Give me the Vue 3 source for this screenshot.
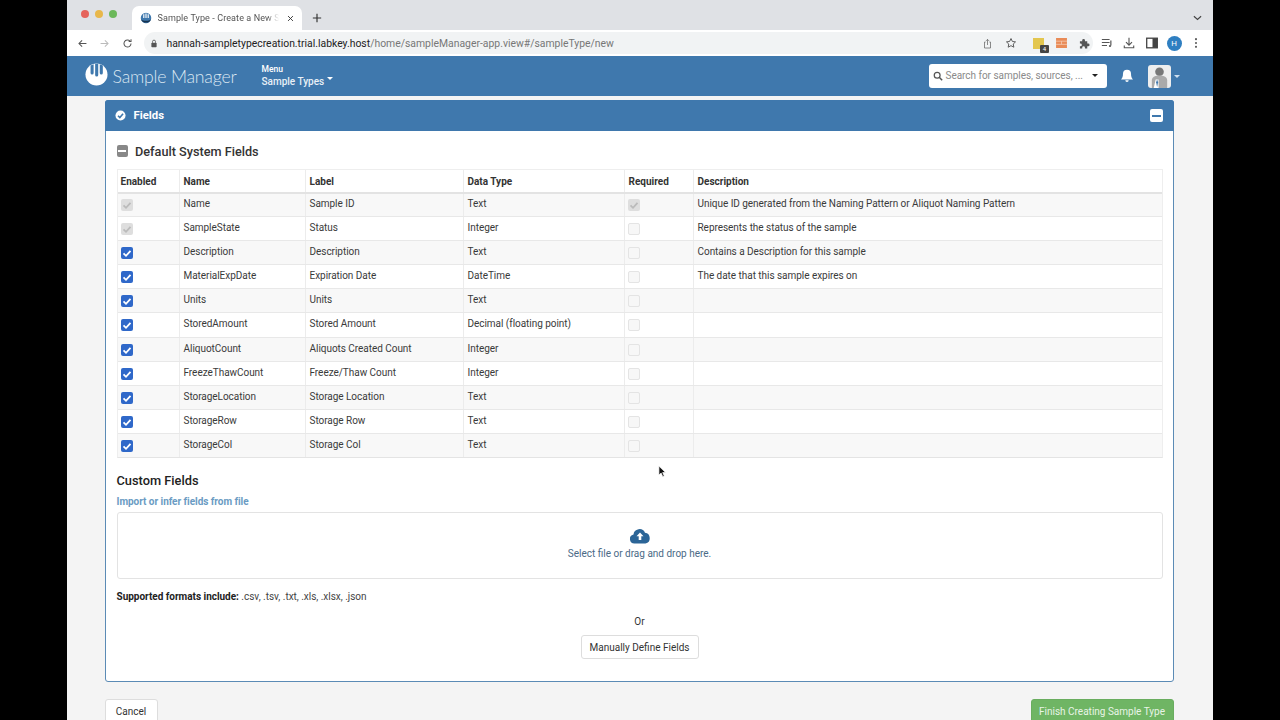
<template>
  <div class="stage">
    <div class="browser">
      <div class="tabstrip">
        <div class="lights"><i class="l r"></i><i class="l y"></i><i class="l g"></i></div>
        <div class="tab">
          <svg class="favicon" viewBox="0 0 16 16"><circle cx="8" cy="8" r="7" fill="#3f78ad"/><path d="M1.500 9.500c2 3 11 3 13 0-1 6-12 6-13 0z" fill="#16324e"/><path d="M5 3v5M8 2v6M11 3v5" stroke="#e4edf5" stroke-width="1.800"/></svg>
          <span class="tabtitle">Sample Type - Create a New S</span>
          <svg class="tabx" viewBox="0 0 10 10"><path d="M1.500 1.500l7 7M8.500 1.500l-7 7" stroke="#333" stroke-width="1.300"/></svg>
        </div>
        <svg class="plus" viewBox="0 0 12 12"><path d="M6 1v10M1 6h10" stroke="#333" stroke-width="1.400"/></svg>
        <svg class="chev" viewBox="0 0 10 6"><path d="M1 1l4 3.500L9 1" fill="none" stroke="#444" stroke-width="1.300"/></svg>
      </div>
      <div class="toolbar">
        <svg class="tb back" viewBox="0 0 14 14"><path d="M12 7H2.500M6.500 3L2.500 7l4 4" fill="none" stroke="#555" stroke-width="1.300"/></svg>
        <svg class="tb fwd" viewBox="0 0 14 14"><path d="M2 7h9.500M7.500 3l4 4-4 4" fill="none" stroke="#bbb" stroke-width="1.300"/></svg>
        <svg class="tb reload" viewBox="0 0 14 14"><path d="M11.500 7a4.500 4.500 0 1 1-1.300-3.200M11.500 1.500v3h-3" fill="none" stroke="#555" stroke-width="1.300"/></svg>
        <div class="omnibox">
          <svg class="lock" viewBox="0 0 10 12"><rect x="1.500" y="5" width="7" height="6" rx="1" fill="#555"/><path d="M3 5V3.500a2 2 0 0 1 4 0V5" fill="none" stroke="#555" stroke-width="1.100"/></svg>
          <span class="url"><b>hannah-sampletypecreation.trial.labkey.host</b>/home/sampleManager-app.view#/sampleType/new</span>
          <svg class="share" viewBox="0 0 12 14"><path d="M3.500 5H2v8h8V5H8.500M6 9V1.500M4 3.500l2-2 2 2" fill="none" stroke="#666" stroke-width="1"/></svg>
          <svg class="star" viewBox="0 0 14 14"><path d="M7 1.800l1.600 3.400 3.700.5-2.700 2.500.7 3.700L7 10.100l-3.300 1.800.7-3.700-2.700-2.500 3.700-.5z" fill="none" stroke="#555" stroke-width="1.100"/></svg>
        </div>
        <div class="exts">
          <div class="ext-y"><span>4</span></div>
          <svg class="ext-o" viewBox="0 0 12 11"><rect width="12" height="11" fill="#e98b57"/><path d="M0 3.500h12M0 7h12M6 3.500v3.500" stroke="#f6d2bb" stroke-width=".8"/></svg>
          <svg class="ext-p" viewBox="0 0 12 12"><path d="M1 3.500h2.500V2.500a1.500 1.500 0 1 1 3 0v1H9V6h1a1.500 1.500 0 1 1 0 3H9v2.500H6.500V10.500a1.500 1.500 0 1 0-3 0v1H1V9h.6a1.500 1.500 0 1 0 0-3H1z" fill="#555"/></svg>
        </div>
        <svg class="tr music" viewBox="0 0 14 12"><path d="M1 2h9M1 5.500h9M1 9h6" stroke="#555" stroke-width="1.200"/><path d="M11.500 3v6" stroke="#555" stroke-width="1.400"/><circle cx="10.500" cy="9.500" r="1.300" fill="#555"/></svg>
        <svg class="tr dl" viewBox="0 0 14 14"><path d="M7 1v8M3.500 6L7 9.500 10.500 6M1.500 10v2.500h11V10" fill="none" stroke="#555" stroke-width="1.300"/></svg>
        <svg class="tr side" viewBox="0 0 12 12"><rect x=".7" y="1.200" width="10.600" height="9.600" fill="none" stroke="#444" stroke-width="1.300"/><rect x="6.500" y="1.200" width="4.800" height="9.600" fill="#444"/></svg>
        <span class="avatar-h">H</span>
        <svg class="dots" viewBox="0 0 4 14"><circle cx="2" cy="2.500" r="1.200" fill="#555"/><circle cx="2" cy="7" r="1.200" fill="#555"/><circle cx="2" cy="11.500" r="1.200" fill="#555"/></svg>
      </div>
      <header class="appnav">
        <svg class="logo" viewBox="0 0 24 24"><circle cx="12" cy="12" r="11.500" fill="#fff"/><path d="M5.800 2.500v8a1.600 1.600 0 0 0 3.200 0V1.200zM10.600 .8v11.700a1.600 1.600 0 0 0 3.200 0V.8zM15.400 1.200v9.300a1.600 1.600 0 0 0 3.200 0v-8z" fill="#3f78ad"/></svg>
        <span class="brand">Sample Manager</span>
        <div class="menu">
          <span class="menu-small">Menu</span>
          <span class="menu-main">Sample Types<i class="caret"></i></span>
        </div>
        <div class="spacer"></div>
        <div class="search">
          <svg class="mag" viewBox="0 0 12 12"><circle cx="5" cy="5" r="3.500" fill="none" stroke="#555" stroke-width="1.500"/><path d="M7.500 7.500L11 11" stroke="#555" stroke-width="1.800"/></svg>
          <span class="placeholder">Search for samples, sources, ...</span>
          <i class="caret dark"></i>
        </div>
        <svg class="bell" viewBox="0 0 14 14"><path d="M7 .8a4 4 0 0 1 4 4c0 3 .8 4.700 2 5.700H1c1.200-1 2-2.700 2-5.700a4 4 0 0 1 4-4z" fill="#fff"/><path d="M5.300 11.300h3.400a1.700 1.700 0 0 1-3.400 0z" fill="#fff"/></svg>
        <div class="userpic">
          <svg viewBox="0 0 24 24"><circle cx="12" cy="7" r="4.500" fill="#777"/><path d="M4 24v-8c0-3 3-5 8-5s8 2 8 5v8z" fill="#aaa"/><path d="M8 15h3v9H6z" fill="#fff"/><path d="M8.500 18l1-3 1 3-1 5z" fill="#3f78ad"/></svg>
        </div>
        <i class="caret light"></i>
      </header>
      <main class="page">
        <section class="panel">
          <div class="panel-head">
            <svg class="check" viewBox="0 0 12 12"><circle cx="6" cy="6" r="5.500" fill="#fff"/><path d="M3.300 6.200l2 2 3.500-4" fill="none" stroke="#3f78ad" stroke-width="1.700"/></svg>
            <span class="panel-title">Fields</span>
            <span class="collapse"><i></i></span>
          </div>
          <div class="panel-body">
            <div class="sys-title">
              <span class="minus"><i></i></span>
              <span>Default System Fields</span>
            </div>
            <div class="grid-table">
              <div class="row head">
                <div v-for="h in heads" :key="h" class="cell">{{ h }}</div>
              </div>
              <div v-for="(r, i) in rows" :key="r.name" class="row" :class="{ odd: i % 2 === 0 }">
                <div class="cell"><span class="box" :class="r.en"><svg v-if="r.en !== 'empty'" viewBox="0 0 12 12"><path d="M2.500 6.300l2.500 2.500 4.500-5" fill="none" :stroke="r.en === 'on' ? '#fff' : '#bbb'" stroke-width="1.800"/></svg></span></div>
                <div class="cell">{{ r.name }}</div>
                <div class="cell">{{ r.label }}</div>
                <div class="cell">{{ r.type }}</div>
                <div class="cell"><span class="box req" :class="r.req ? 'off' : 'empty'"><svg v-if="r.req" viewBox="0 0 12 12"><path d="M2.500 6.300l2.500 2.500 4.500-5" fill="none" stroke="#bbb" stroke-width="1.800"/></svg></span></div>
                <div class="cell">{{ r.desc }}</div>
              </div>
            </div>
            <h3 class="custom">Custom Fields</h3>
            <div class="import">Import or infer fields from file</div>
            <div class="drop">
              <svg class="cloud" viewBox="0 0 22 16"><path d="M5.500 15.500a4.500 4.500 0 0 1-1-8.900A6 6 0 0 1 16 4.700a5.500 5.500 0 0 1 .5 10.800z" fill="#2b6597"/><path d="M11 4.500l3.500 3.700h-2.200v3.800H9.700V8.200H7.500z" fill="#fff"/></svg>
              <span class="drop-text">Select file or drag and drop here.</span>
            </div>
            <p class="formats"><b>Supported formats include:</b> .csv, .tsv, .txt, .xls, .xlsx, .json</p>
            <div class="or">Or</div>
            <button class="btn manual">Manually Define Fields</button>
          </div>
        </section>
        <div class="footer">
          <button class="btn cancel">Cancel</button>
          <button class="btn finish">Finish Creating Sample Type</button>
        </div>
        <svg class="cursor" viewBox="0 0 10 14"><path d="M1 1v10l2.500-2.200 1.800 4 1.700-.8-1.800-3.800h3.300z" fill="#111" stroke="#fff" stroke-width=".8"/></svg>
      </main>
    </div>
  </div>
</template>

<script setup>
const heads = ['Enabled', 'Name', 'Label', 'Data Type', 'Required', 'Description']
const rows = [
  { en: 'off', name: 'Name', label: 'Sample ID', type: 'Text', req: true, desc: 'Unique ID generated from the Naming Pattern or Aliquot Naming Pattern' },
  { en: 'off', name: 'SampleState', label: 'Status', type: 'Integer', desc: 'Represents the status of the sample' },
  { en: 'on', name: 'Description', label: 'Description', type: 'Text', desc: 'Contains a Description for this sample' },
  { en: 'on', name: 'MaterialExpDate', label: 'Expiration Date', type: 'DateTime', desc: 'The date that this sample expires on' },
  { en: 'on', name: 'Units', label: 'Units', type: 'Text', desc: '' },
  { en: 'on', name: 'StoredAmount', label: 'Stored Amount', type: 'Decimal (floating point)', desc: '' },
  { en: 'on', name: 'AliquotCount', label: 'Aliquots Created Count', type: 'Integer', desc: '' },
  { en: 'on', name: 'FreezeThawCount', label: 'Freeze/Thaw Count', type: 'Integer', desc: '' },
  { en: 'on', name: 'StorageLocation', label: 'Storage Location', type: 'Text', desc: '' },
  { en: 'on', name: 'StorageRow', label: 'Storage Row', type: 'Text', desc: '' },
  { en: 'on', name: 'StorageCol', label: 'Storage Col', type: 'Text', desc: '' }
]
</script>

<style>
html, body { margin: 0; background: #000; overflow: hidden; }
</style>

<style scoped>
.stage { width: 1280px; height: 720px; background: #000; display: flex; justify-content: center; padding-right: 1px; box-sizing: border-box; overflow: hidden; font-family: Roboto, "Liberation Sans", sans-serif; color: #333; }
.browser { width: 1146px; height: 720px; display: flex; flex-direction: column; overflow: hidden; background: #f4f4f4; }

.tabstrip { height: 30px; flex: none; background: #dfe1e5; display: flex; align-items: center; position: relative; }
.lights { display: flex; gap: 6px; margin-left: 14px; margin-top: -3px; }
.l { width: 8px; height: 8px; border-radius: 50%; display: block; }
.r { background: #e5635b; } .y { background: #e8b74a; } .g { background: #6bb85a; }
.tab { width: 170px; height: 24px; margin-top: 6px; margin-left: 15px; background: #fff; border-radius: 7px 7px 0 0; display: flex; align-items: center; padding: 0 0 0 8px; box-sizing: border-box; flex: none; }
.favicon { width: 12px; height: 12px; flex: none; }
.tabtitle { font-size: 9px; margin-left: 6px; color: #555; white-space: nowrap; width: 121px; flex: none; letter-spacing: .1px; -webkit-mask-image: linear-gradient(90deg, #000 90%, transparent); mask-image: linear-gradient(90deg, #000 90%, transparent); overflow: hidden; }
.tabx { width: 7px; height: 7px; margin-left: 8px; flex: none; }
.plus { width: 10px; height: 10px; margin-left: 10px; margin-top: 5px; flex: none; }
.chev { position: absolute; right: 11px; top: 15px; width: 9px; height: 6px; }

.toolbar { height: 26px; flex: none; background: #fff; display: flex; align-items: center; }
.tb { width: 11px; height: 11px; flex: none; }
.back { margin-left: 10px; }
.fwd { margin-left: 11px; }
.reload { margin-left: 12px; }
.omnibox { margin-left: 11px; width: 886px; height: 22px; background: #f1f3f4; border-radius: 11px 0 0 11px; display: flex; align-items: center; box-sizing: border-box; padding-left: 6px; flex: none; }
.lock { width: 8px; height: 9px; flex: none; }
.url { font-size: 10.400px; margin-left: 9px; color: #777; white-space: nowrap; flex: 1; }
.url b { font-weight: 400; color: #222; }
.share { width: 9px; height: 11px; flex: none; margin-right: 13px; }
.star { width: 12px; height: 12px; flex: none; margin-right: 13px; }
.exts { width: 63px; height: 22px; background: #f1f3f4; border-radius: 0 11px 11px 0; display: flex; align-items: center; flex: none; }
.ext-y { width: 11px; height: 11px; background: #e3c64f; margin-left: 3.500px; position: relative; flex: none; }
.ext-y span { position: absolute; left: 7px; top: 7px; width: 9px; height: 8px; background: #444; color: #fff; font-size: 6px; line-height: 8px; text-align: center; border-radius: 1px; }
.ext-o { width: 11px; height: 10px; margin-left: 11.500px; flex: none; }
.ext-p { width: 11px; height: 11px; margin-left: 12px; flex: none; }
.tr { width: 12px; height: 12px; flex: none; }
.music { margin-left: 8px; }
.dl { margin-left: 10px; }
.side { margin-left: 11px; }
.avatar-h { width: 15px; height: 15px; border-radius: 50%; background: #2f7fc1; color: #fff; font-size: 8px; line-height: 15px; text-align: center; margin-left: 9px; flex: none; }
.dots { width: 4px; height: 12px; margin-left: 12px; flex: none; }

.appnav { height: 40px; flex: none; background: #3f78ad; display: flex; align-items: center; color: #fff; }
.logo { width: 23px; height: 23px; margin-left: 18px; margin-top: -3px; flex: none; }
.brand { font-size: 17.700px; font-weight: 300; margin-left: 5px; color: #dbe7f2; letter-spacing: -.2px; font-family: Lato, Roboto, sans-serif; white-space: nowrap; width: 141px; flex: none; }
.menu { display: flex; flex-direction: column; margin-left: 8px; margin-top: -2px; }
.menu-small { font-size: 8.500px; font-weight: 500; line-height: 12px; }
.menu-main { font-size: 10px; font-weight: 500; line-height: 13px; margin-top: 0; color: #e8f0f7; }
.caret { display: inline-block; width: 0; height: 0; border-left: 3px solid transparent; border-right: 3px solid transparent; border-top: 3px solid #fff; }
.menu-main .caret { margin-left: 3px; vertical-align: 5px; }
.spacer { flex: 1; }
.search { width: 178px; height: 24px; background: #fff; border-radius: 3px; display: flex; align-items: center; box-sizing: border-box; padding: 0 9px 0 4px; margin-bottom: 1px; flex: none; }
.mag { width: 10px; height: 10px; flex: none; }
.placeholder { font-size: 10px; color: #8a8a8a; margin-left: 3px; white-space: nowrap; flex: 1; letter-spacing: -.03px; }
.caret.dark { border-top-color: #222; }
.bell { width: 14px; height: 14px; margin-left: 13px; flex: none; margin-bottom: 1px; }
.userpic { width: 23px; height: 23px; background: #eee; border-radius: 3px; margin-left: 14px; overflow: hidden; flex: none; }
.userpic svg { width: 23px; height: 23px; display: block; }
.caret.light { margin-left: 3px; margin-right: 33px; border-top-color: #cfe0f0; }

.page { flex: 1; padding: 4px 39px 0 38px; display: flex; flex-direction: column; position: relative; overflow: hidden; }
.panel { background: #fff; border: 1px solid #5b8bb5; border-radius: 3px; box-sizing: border-box; height: 582px; flex: none; }
.panel-head { height: 31px; background: #3f78ad; color: #fff; display: flex; align-items: center; padding: 0 11px 0 10px; margin: -1px -1px 0; border-radius: 3px 3px 0 0; }
.check { width: 11px; height: 11px; flex: none; }
.panel-title { font-size: 11.300px; font-weight: 700; margin-left: 8px; flex: 1; }
.collapse { width: 13px; height: 13px; background: #fff; border-radius: 2px; display: flex; align-items: center; justify-content: center; }
.collapse i { width: 9px; height: 2px; background: #3f78ad; display: block; }
.panel-body { padding: 12px 10px 0 11px; display: flex; flex-direction: column; }
.sys-title { display: flex; align-items: center; height: 16px; font-size: 12.700px; font-weight: 500; color: #333; }
.minus { width: 11.500px; height: 11.500px; background: #888; border-radius: 2px; margin-right: 7px; display: flex; align-items: center; justify-content: center; }
.minus i { width: 8px; height: 2px; background: #fff; display: block; }

.grid-table { margin-top: 10px; border: 1px solid #eee; border-bottom: 1px solid #e4e4e4; border-right: 1px solid #eee; }
.row { display: grid; grid-template-columns: 61px 126px 158px 161px 69px 1fr; height: 24.100px; border-top: 1px solid #e8e8e8; box-sizing: border-box; }
.row.odd { background: #f8f8f8; }
.row.head { height: 22px; border-top: 0; background: #fff; font-weight: 700; }
.row.head + .row { border-top: 2px solid #e3e3e3; height: 24.100px; }
.row.head + .row .cell { line-height: 20px; }
.cell { font-size: 10px; line-height: 22px; padding-left: 4px; border-left: 1px solid #ececec; white-space: nowrap; overflow: hidden; color: #3a3a3a; letter-spacing: -.04px; }
.cell:first-child { border-left: 0; padding-left: 3px; }
.head .cell { line-height: 23px; color: #333; letter-spacing: 0; }
.box { display: block; width: 12px; height: 12px; margin: 6px 0 0 0; border-radius: 2px; box-sizing: border-box; }
.box.req { margin-left: -1px; }
.row.head + .row .box { margin-top: 5px; }
.box svg { width: 12px; height: 12px; display: block; }
.box.on { background: #2f68c9; }
.box.off { background: #dedede; }
.box.empty { background: #f7f7f7; border: 1px solid #e4e4e4; }

.custom { font-size: 12.800px; font-weight: 500; margin: 15px 0 0; line-height: 16px; color: #222; }
.import { font-size: 10px; font-weight: 700; color: #6a9bc3; margin-top: 6px; line-height: 13px; letter-spacing: -.04px; }
.drop { height: 67px; margin-top: 4px; border: 1px solid #e3e3e3; border-radius: 3px; display: flex; flex-direction: column; align-items: center; box-sizing: border-box; padding-top: 15px; }
.cloud { width: 22px; height: 16px; display: block; }
.drop-text { font-size: 10px; color: #4a6a86; line-height: 13px; margin-top: 3px; }
.formats { font-size: 10px; margin: 11px 0 0; line-height: 14px; color: #444; letter-spacing: -.02px; }
.formats b { color: #222; }
.or { text-align: center; font-size: 10px; margin-top: 11px; line-height: 14px; }
.btn { font-family: Roboto, "Liberation Sans", sans-serif; font-size: 10px; border-radius: 3px; cursor: pointer; box-sizing: border-box; }
.manual { align-self: center; width: 118px; height: 24px; margin-top: 6px; background: #fff; border: 1px solid #ddd; color: #333; padding: 0; }
.footer { display: flex; justify-content: space-between; margin-top: 17px; flex: none; }
.cancel { width: 53px; height: 28px; background: #fff; border: 1px solid #ddd; color: #333; padding: 0 0 4px; }
.finish { width: 143px; height: 28px; background: #6fb564; border: 1px solid #69ad5f; color: #e8f4e6; padding: 0 0 4px; }
.cursor { position: absolute; left: 591px; top: 369px; width: 9px; height: 13px; }
</style>
